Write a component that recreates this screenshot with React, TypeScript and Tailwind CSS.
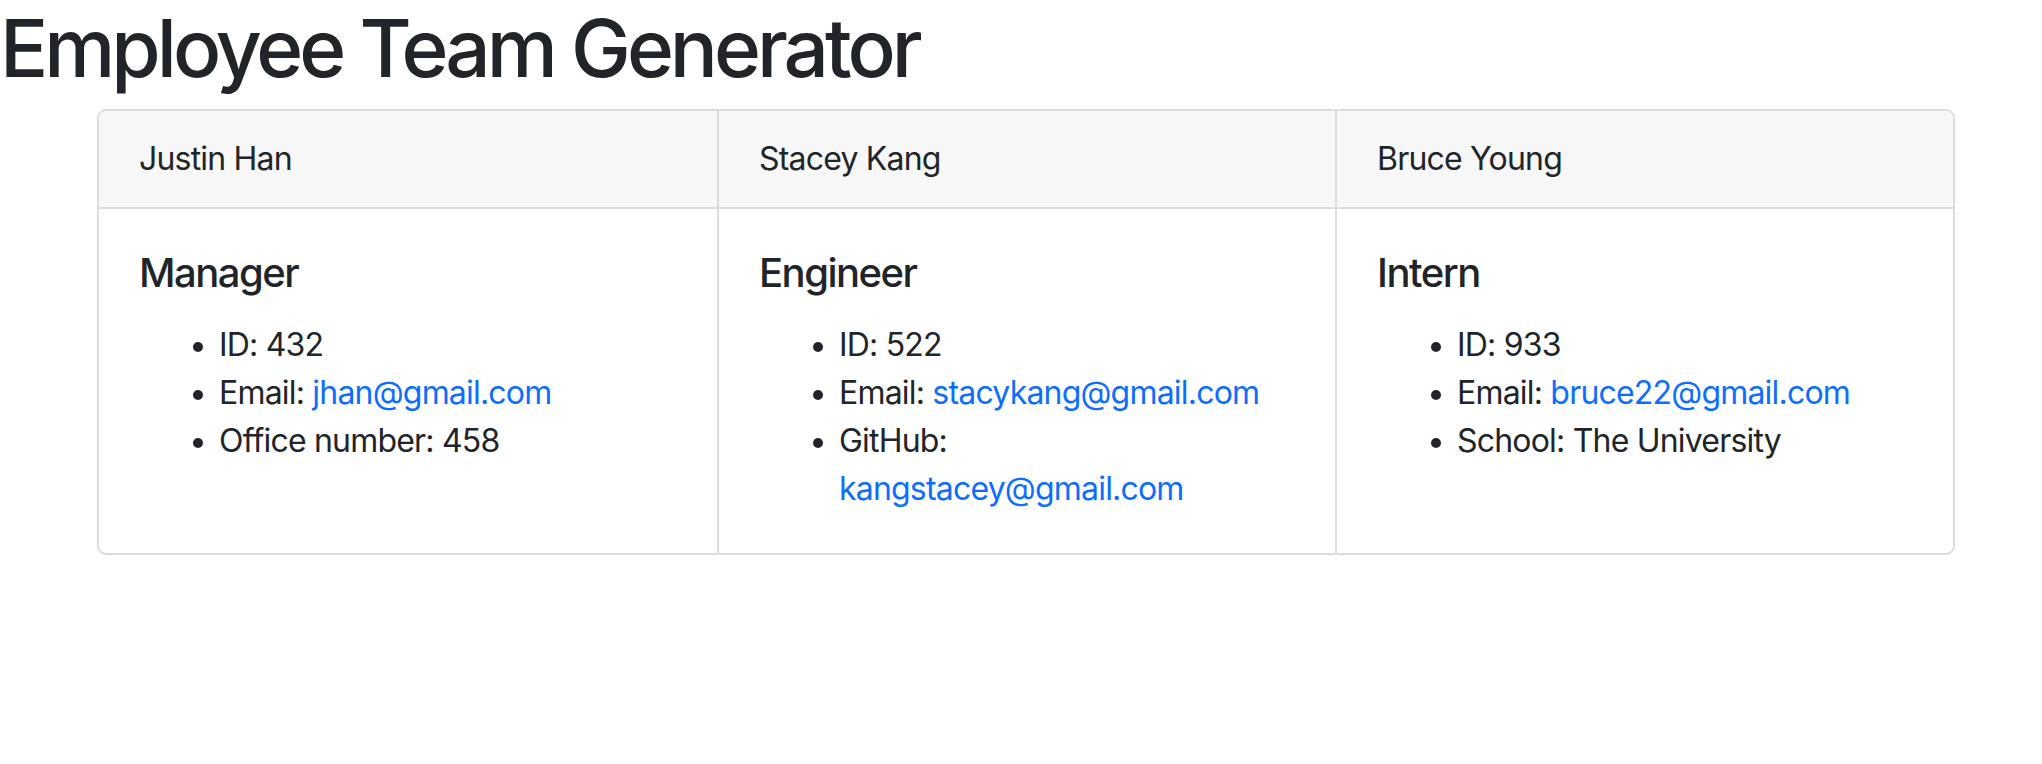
const team = [
  {
    name: "Justin Han",
    role: "Manager",
    id: 432,
    email: "jhan@gmail.com",
    extra: { label: "Office number", value: "458" },
  },
  {
    name: "Stacey Kang",
    role: "Engineer",
    id: 522,
    email: "stacykang@gmail.com",
    extra: { label: "GitHub", value: "kangstacey@gmail.com", link: true },
  },
  {
    name: "Bruce Young",
    role: "Intern",
    id: 933,
    email: "bruce22@gmail.com",
    extra: { label: "School", value: "The University" },
  },
];

export default function App() {
  return (
    <div className="min-h-[764px] bg-white text-[#212529] font-['Inter','Liberation_Sans',sans-serif]">
      <h1 className="text-[80px] leading-[96px] font-medium tracking-[-4px] mb-[13px]">
        Employee Team Generator
      </h1>

      <div className="ml-[97px] w-[1858px] grid grid-cols-3 border-2 border-[#dcdcdc] rounded-[9px] overflow-hidden">
        {team.map((member, i) => (
          <div
            key={member.name}
            className={`flex flex-col ${i > 0 ? "border-l-2 border-[#dcdcdc]" : ""}`}
          >
            <div className="bg-[#f7f7f7] border-b-2 border-[#dcdcdc] px-[40px] py-[24px] text-[32px] leading-[48px] tracking-[-0.8px]">
              {member.name}
            </div>
            <div className="p-[40px] text-[32px] leading-[48px] tracking-[-0.8px]">
              <h5 className="text-[40px] leading-[48px] font-medium tracking-[-1.5px] mb-[24px]">
                {member.role}
              </h5>
              <ul className="list-disc pl-[80px] marker:text-[30px]">
                <li>ID: {member.id}</li>
                <li>
                  Email:{" "}
                  <a href={`mailto:${member.email}`} className="text-[#0d6efd]">
                    {member.email}
                  </a>
                </li>
                <li>
                  {member.extra.label}:{" "}
                  {member.extra.link ? (
                    <a href="#" className="text-[#0d6efd]">
                      {member.extra.value}
                    </a>
                  ) : (
                    member.extra.value
                  )}
                </li>
              </ul>
            </div>
          </div>
        ))}
      </div>
    </div>
  );
}
